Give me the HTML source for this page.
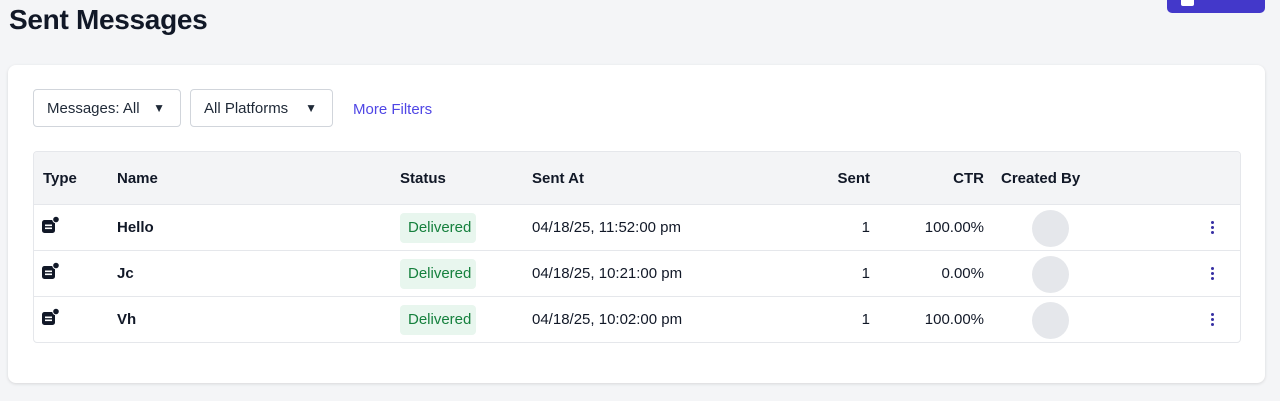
<!DOCTYPE html>
<html><head><meta charset="utf-8"><style>
*{box-sizing:border-box;margin:0;padding:0}
body{width:1280px;height:401px;background:#f4f5f7;font-family:"Liberation Sans",sans-serif;color:#111827;position:relative;overflow:hidden}
h1{position:absolute;left:9px;top:4px;font-size:28px;font-weight:700;color:#111827;letter-spacing:-0.3px}
.export{position:absolute;left:1167px;top:-20px;width:98px;height:33px;background:#4338ca;border-radius:5px;color:#fff;font-size:15px;padding:0 0 0 38px}
.export:before{content:"";position:absolute;left:14px;top:12px;width:13px;height:14px;background:#fff;border-radius:2px}
.card{position:absolute;left:8px;top:65px;width:1257px;height:318px;background:#fff;border-radius:8px;box-shadow:0 1px 3px rgba(0,0,0,.12)}
.sel{position:absolute;top:89px;height:38px;border:1px solid #d1d5db;border-radius:4px;background:#fff;font-size:15px;color:#1f2937;padding:10px 0 0 13px}
.sel span{position:absolute;right:15px;top:11px;font-size:12px}
.more{position:absolute;left:353px;top:101px;font-size:15px;color:#4f46e5}
.tbl{position:absolute;left:33px;top:151px;width:1208px;height:192px;border:1px solid #e5e7eb;border-radius:4px;overflow:hidden}
.hd{position:absolute;left:0;top:0;width:100%;height:53px;background:#f3f4f6;border-bottom:1px solid #e5e7eb}
.t{position:absolute;font-size:15px;white-space:nowrap}
.b{font-weight:700}
.row{position:absolute;left:0;width:100%;height:46px;border-bottom:1px solid #e5e7eb}
.badge{position:absolute;left:366px;top:8px;width:76px;height:30px;background:#e8f6ee;border-radius:4px;color:#15803d;font-size:15px;padding:6px 0 0 8px}
.av{position:absolute;left:998px;top:5px;width:37px;height:37px;border-radius:50%;background:#e5e7eb}
.dots{position:absolute;left:1177px;top:16px;width:3px}
.dots i{display:block;width:3px;height:3px;background:#3730a3;border-radius:50%;margin-bottom:2px}
.ic{position:absolute;left:8px;top:11px}
</style></head><body>
<h1>Sent Messages</h1>
<div class="export"></div>
<div class="card"></div>
<div class="sel" style="left:33px;width:148px">Messages: All<span>▼</span></div>
<div class="sel" style="left:190px;width:143px">All Platforms<span>▼</span></div>
<div class="more">More Filters</div>
<div class="tbl">
<div class="hd">
<div class="t b" style="left:9px;top:18px">Type</div>
<div class="t b" style="left:83px;top:18px">Name</div>
<div class="t b" style="left:366px;top:18px">Status</div>
<div class="t b" style="left:498px;top:18px">Sent At</div>
<div class="t b" style="right:370px;top:18px">Sent</div>
<div class="t b" style="right:256px;top:18px">CTR</div>
<div class="t b" style="left:967px;top:18px">Created By</div>
</div>
<div class="row" style="top:53px">
<svg class="ic" width="18" height="18" viewBox="0 0 18 18"><rect x="0" y="4" width="13" height="13" rx="2.5" fill="#111827"/><rect x="3" y="8.5" width="7" height="1.6" fill="#fff"/><rect x="3" y="11.5" width="7" height="1.6" fill="#fff"/><circle cx="14" cy="3.5" r="3.8" fill="#fff"/><circle cx="14" cy="3.5" r="2.8" fill="#111827"/></svg>
<div class="t b" style="left:83px;top:14px">Hello</div>
<div class="badge">Delivered</div>
<div class="t" style="left:498px;top:14px">04/18/25, 11:52:00 pm</div>
<div class="t" style="right:370px;top:14px">1</div>
<div class="t" style="right:256px;top:14px">100.00%</div>
<div class="av"></div><div class="dots"><i></i><i></i><i></i></div>
</div>
<div class="row" style="top:99px">
<svg class="ic" width="18" height="18" viewBox="0 0 18 18"><rect x="0" y="4" width="13" height="13" rx="2.5" fill="#111827"/><rect x="3" y="8.5" width="7" height="1.6" fill="#fff"/><rect x="3" y="11.5" width="7" height="1.6" fill="#fff"/><circle cx="14" cy="3.5" r="3.8" fill="#fff"/><circle cx="14" cy="3.5" r="2.8" fill="#111827"/></svg>
<div class="t b" style="left:83px;top:14px">Jc</div>
<div class="badge">Delivered</div>
<div class="t" style="left:498px;top:14px">04/18/25, 10:21:00 pm</div>
<div class="t" style="right:370px;top:14px">1</div>
<div class="t" style="right:256px;top:14px">0.00%</div>
<div class="av"></div><div class="dots"><i></i><i></i><i></i></div>
</div>
<div class="row" style="top:145px;border-bottom:none">
<svg class="ic" width="18" height="18" viewBox="0 0 18 18"><rect x="0" y="4" width="13" height="13" rx="2.5" fill="#111827"/><rect x="3" y="8.5" width="7" height="1.6" fill="#fff"/><rect x="3" y="11.5" width="7" height="1.6" fill="#fff"/><circle cx="14" cy="3.5" r="3.8" fill="#fff"/><circle cx="14" cy="3.5" r="2.8" fill="#111827"/></svg>
<div class="t b" style="left:83px;top:14px">Vh</div>
<div class="badge">Delivered</div>
<div class="t" style="left:498px;top:14px">04/18/25, 10:02:00 pm</div>
<div class="t" style="right:370px;top:14px">1</div>
<div class="t" style="right:256px;top:14px">100.00%</div>
<div class="av"></div><div class="dots"><i></i><i></i><i></i></div>
</div>
</div>
</body></html>
